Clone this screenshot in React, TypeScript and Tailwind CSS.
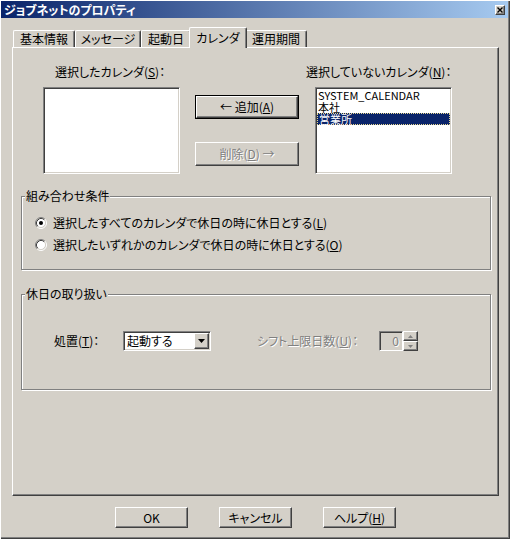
import React from "react";

const raised =
  "bg-[#d4d0c8] border border-l-white border-t-white border-r-[#404040] border-b-[#404040] shadow-[inset_-1px_-1px_0_#808080]";
const sunken =
  "border border-l-[#808080] border-t-[#808080] border-r-white border-b-white shadow-[inset_1px_1px_0_#404040,inset_-1px_-1px_0_#d4d0c8]";
const tabBase =
  "bg-[#d4d0c8] border-l border-t border-r border-l-white border-t-white border-r-[#404040] shadow-[inset_-1px_0_0_#808080] rounded-tl-[2px] rounded-tr-[2px]";
const disabledText = "text-[#808080] [text-shadow:1px_1px_0_#ffffff]";

function Radio({ checked }: { checked: boolean }) {
  return (
    <svg width="12" height="12" viewBox="0 0 12 12" className="shrink-0">
      <circle cx="6" cy="6" r="4.5" fill="#ffffff" />
      <path d="M2.11 9.89 A5.5 5.5 0 0 1 9.89 2.11" stroke="#808080" fill="none" />
      <path d="M9.89 2.11 A5.5 5.5 0 0 1 2.11 9.89" stroke="#ffffff" fill="none" />
      <path d="M2.82 9.18 A4.5 4.5 0 0 1 9.18 2.82" stroke="#404040" fill="none" />
      <path d="M9.18 2.82 A4.5 4.5 0 0 1 2.82 9.18" stroke="#d4d0c8" fill="none" />
      {checked && <circle cx="6" cy="6" r="2" fill="#000000" />}
    </svg>
  );
}

export default function App() {
  return (
    <div className="w-[510px] h-[539px] overflow-hidden bg-[#d4d0c8] flex flex-col pl-[1px] pt-[1px] pr-[2px] pb-[2px] shadow-[inset_1px_1px_0_#ffffff,inset_-1px_-1px_0_#404040,inset_-2px_-2px_0_#808080] font-['Noto_Sans_CJK_JP',sans-serif] text-[12px] leading-[12px] text-black [font-feature-settings:'palt']">
      {/* Title bar */}
      <div className="h-[17px] shrink-0 flex items-center justify-between bg-[linear-gradient(to_right,#0a246a,#a6caf0)]">
        <span className="pl-[3px] font-bold text-white">ジョブネットのプロパティ</span>
        <div className={`${raised} w-[10px] h-[10px] mr-[3px] flex items-center justify-center`}>
          <svg width="6" height="6" viewBox="0 0 6 6">
            <path d="M0.5 0.5 L5.5 5.5 M5.5 0.5 L0.5 5.5" stroke="#000" strokeWidth="1.4" />
          </svg>
        </div>
      </div>

      <div className="flex flex-col pl-[11px]">
        {/* Tabs */}
        <div className="mt-[9px] ml-[1px] h-[20px] flex items-end relative z-10">
          <div className={`${tabBase} w-[62px] h-[17px] flex items-center justify-center`}>基本情報</div>
          <div className={`${tabBase} w-[66px] h-[17px] flex items-center justify-center`}>メッセージ</div>
          <div className={`${tabBase} w-[50px] h-[17px] flex items-center justify-center`}>起動日</div>
          <div className={`${tabBase} -mx-[2px] -mb-[1px] w-[58px] h-[21px] flex justify-center pt-[4px] relative z-10`}>
            カレンダ
          </div>
          <div className={`${tabBase} w-[62px] h-[17px] flex items-center justify-center`}>運用期間</div>
        </div>

        {/* Panel */}
        <div className="w-[487px] h-[449px] border border-l-white border-t-white border-r-[#404040] border-b-[#404040] shadow-[inset_-1px_-1px_0_#808080] flex flex-col">
          {/* labels */}
          <div className="mt-[18px] h-[12px] flex">
            <div className="w-[293px] pl-[42px]">
              選択したカレンダ(<span className="underline">S</span>)：
            </div>
            <div>
              選択していないカレンダ(<span className="underline">N</span>)：
            </div>
          </div>

          {/* lists & buttons */}
          <div className="mt-[9px] flex">
            <div className={`${sunken} ml-[30px] w-[137px] h-[87px] bg-white`} />
            <div className="ml-[15px] w-[104px] flex flex-col pt-[8px]">
              <div className="h-[24px] border border-black flex">
                <div className={`${raised} flex-1 flex items-center justify-center`}>
                  ← 追加(<span className="underline">A</span>)
                </div>
              </div>
              <div className={`${raised} mt-[23px] h-[24px] flex items-center justify-center ${disabledText}`}>
                削除(<span className="underline">D</span>) →
              </div>
            </div>
            <div className={`${sunken} ml-[16px] w-[137px] h-[87px] bg-white p-[1px] flex flex-col text-[11px]`}>
              <div className="h-[12px] pl-[1px] leading-[12px]">SYSTEM_CALENDAR</div>
              <div className="h-[12px] pl-[1px] leading-[12px]">本社</div>
              <div className="h-[12px] pl-[1px] leading-[10px] bg-[#0a246a] text-white border border-dotted border-[#e8d890]">
                営業所
              </div>
            </div>
          </div>

          {/* group 1 */}
          <fieldset className="mt-[16px] ml-[8px] w-[470px] border border-[#808080] shadow-[inset_1px_1px_0_#ffffff,1px_1px_0_#ffffff] pb-[18px]">
            <legend className="ml-[3px] px-[1px] bg-[#d4d0c8] leading-[12px]">組み合わせ条件</legend>
            <div className="mt-[15px] ml-[13px] h-[12px] flex items-center gap-[6px]">
              <Radio checked />
              <span>
                選択したすべてのカレンダで休日の時に休日とする(<span className="underline">L</span>)
              </span>
            </div>
            <div className="mt-[10px] ml-[13px] h-[12px] flex items-center gap-[6px]">
              <Radio checked={false} />
              <span>
                選択したいずれかのカレンダで休日の時に休日とする(<span className="underline">O</span>)
              </span>
            </div>
          </fieldset>

          {/* group 2 */}
          <fieldset className="mt-[18px] ml-[8px] w-[470px] border border-[#808080] shadow-[inset_1px_1px_0_#ffffff,1px_1px_0_#ffffff] pb-[38px]">
            <legend className="ml-[3px] px-[1px] bg-[#d4d0c8] leading-[12px]">休日の取り扱い</legend>
            <div className="mt-[31px] ml-[32px] h-[20px] flex items-center">
              <div className="w-[69px]">
                処置(<span className="underline">T</span>)：
              </div>
              <div className={`${sunken} w-[88px] h-[20px] bg-white flex items-center p-[1px]`}>
                <span className="flex-1 pl-[2px]">起動する</span>
                <div className={`${raised} w-[15px] h-[16px] flex items-center justify-center`}>
                  <svg width="7" height="4" viewBox="0 0 7 4">
                    <path d="M0 0 H7 L3.5 4 Z" fill="#000" />
                  </svg>
                </div>
              </div>
              <div className={`ml-[46px] w-[122px] ${disabledText}`}>
                シフト上限日数(<span className="underline">U</span>)：
              </div>
              <div className={`${sunken} w-[24px] h-[20px] bg-[#d4d0c8] flex items-center justify-end pr-[3px] ${disabledText}`}>
                0
              </div>
              <div className="w-[15px] h-[20px] flex flex-col">
                <div className={`${raised} h-[10px] flex items-center justify-center`}>
                  <svg width="5" height="3" viewBox="0 0 5 3">
                    <path d="M0 3 H5 L2.5 0 Z" fill="#808080" />
                  </svg>
                </div>
                <div className={`${raised} h-[10px] flex items-center justify-center`}>
                  <svg width="5" height="3" viewBox="0 0 5 3">
                    <path d="M0 0 H5 L2.5 3 Z" fill="#808080" />
                  </svg>
                </div>
              </div>
            </div>
          </fieldset>
        </div>

        {/* bottom buttons */}
        <div className="mt-[11px] ml-[103px] flex gap-[31px]">
          <div className={`${raised} w-[73px] h-[21px] flex items-center justify-center`}>OK</div>
          <div className={`${raised} w-[73px] h-[21px] flex items-center justify-center`}>キャンセル</div>
          <div className={`${raised} w-[73px] h-[21px] flex items-center justify-center`}>
            ヘルプ(<span className="underline">H</span>)
          </div>
        </div>
      </div>
    </div>
  );
}
